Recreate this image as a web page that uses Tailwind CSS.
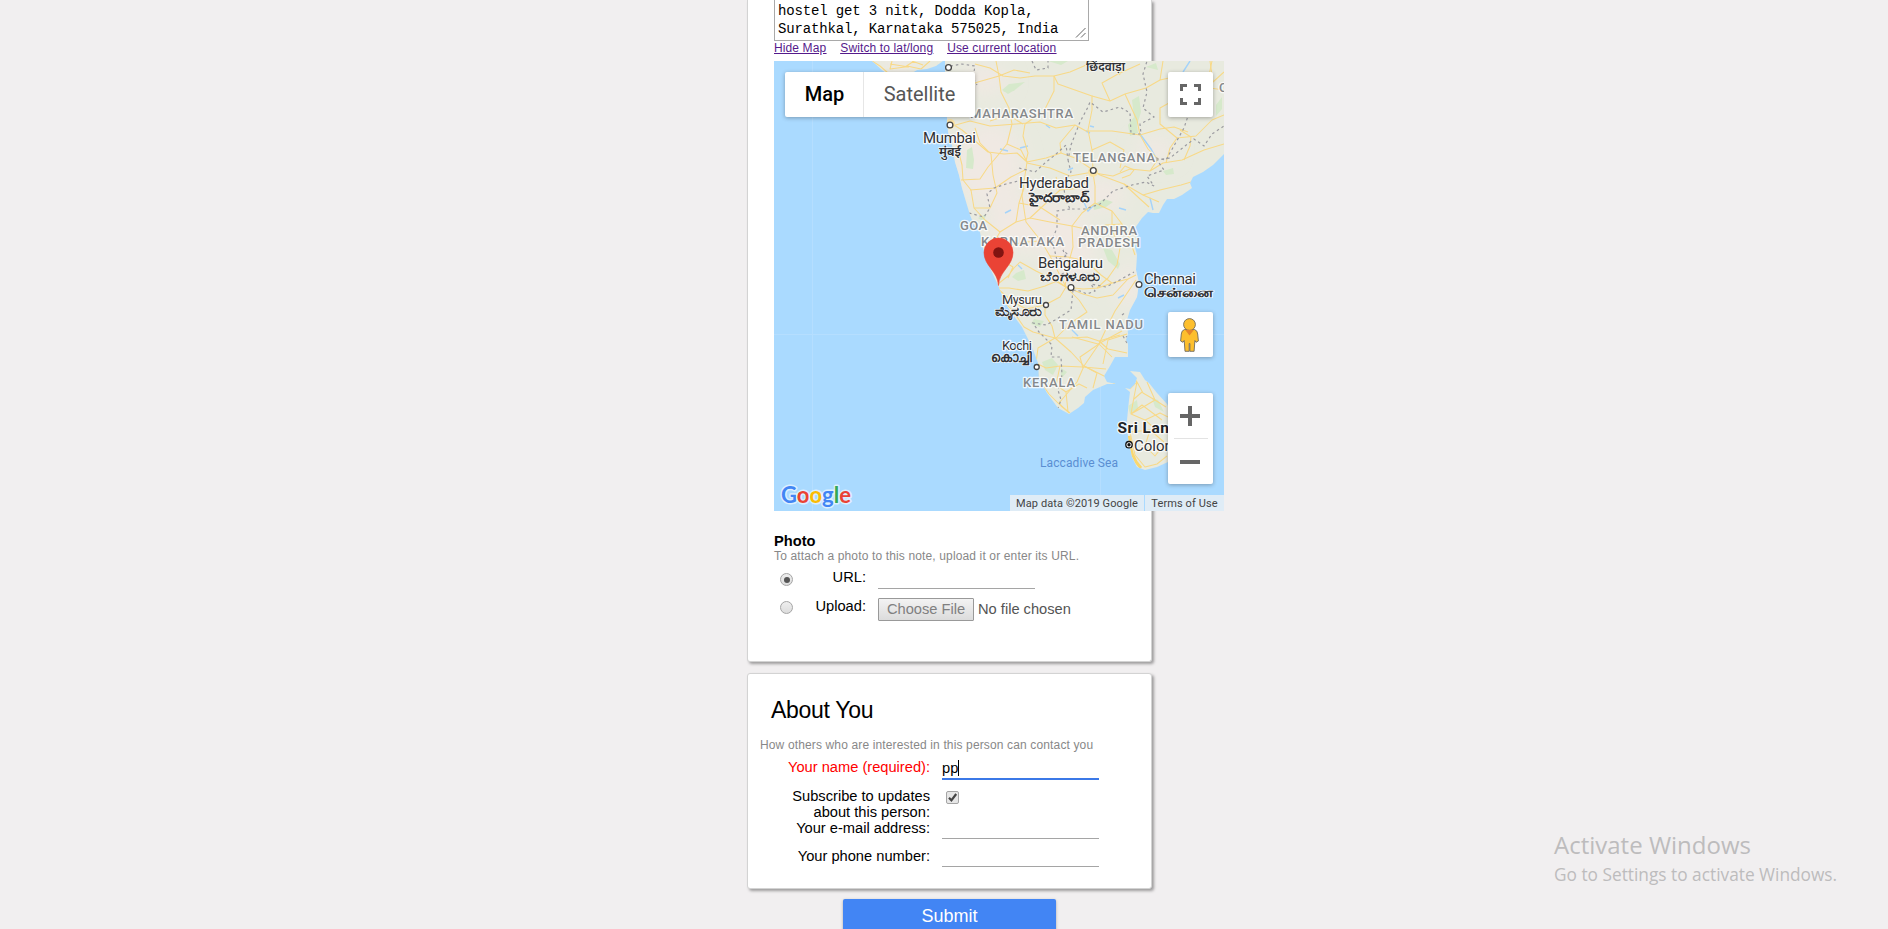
<!DOCTYPE html>
<html lang="en">
<head>
<meta charset="utf-8">
<title>Person Finder</title>
<script src="https://cdn.jsdelivr.net/npm/@tailwindcss/browser@4"></script>
</head>
<body class="relative h-[929px] overflow-hidden bg-[#f1eff0] font-['Liberation_Sans',Arial,sans-serif] text-[14.67px] text-black">
<main class="ml-[747px] flex w-[405px] flex-col">

  <section class="h-[662px] rounded-b-[3px] border border-t-0 border-[#d3d3d3] bg-white pl-[26px] shadow-[2px_2px_3px_rgba(0,0,0,0.35)]">
    <div class="relative h-[41px] w-[315px] border border-t-0 border-[#a9a9a9] pt-[2px] pl-[3px] font-['Liberation_Mono',monospace] text-[14px] leading-[18px] tracking-[-0.16px] whitespace-nowrap">
      <p>hostel get 3 nitk, Dodda Kopla,</p>
      <p>Surathkal, Karnataka 575025, India</p>
      <svg class="absolute right-[2px] bottom-[2px] size-[11px]" viewBox="0 0 11 11" stroke="#666" stroke-width="1"><path d="M1 10.500 10.500 1M6 10.500 10.500 6"/></svg>
    </div>
    <div class="flex h-5 gap-[14px] text-[12px] leading-[14px] tracking-[0.12px] whitespace-nowrap text-[#551a8b] underline">
      <a>Hide Map</a><a>Switch to lat/long</a><a>Use current location</a>
    </div>

    <div class="relative size-[450px] overflow-hidden bg-[#aadaff]">
      <svg class="block size-[450px] font-[Roboto,'Noto_Sans',sans-serif]" viewBox="774 61 450 450">
        <defs>
          <clipPath id="land">
            <path id="india" d="M945 61 945 72 945 90 947 118 948 132 952 145 955 162 959 175 962 188 967 205 970 215 974 225 980 232 983 248 990 268 998 285 1003 298 1010 311 1022 327 1032 347 1038 363 1039 378 1047 393 1058 408 1069 414 1078 408 1084 403 1085 397 1093 390 1107 384 1116 384 1107 382 1104 376 1110 366 1115 357 1128 357 1128 344 1126 340 1128 334 1127 320 1130 310 1137 297 1139 283 1136 270 1137 255 1135 247 1137 237 1135 228 1142 218 1148 212 1153 213 1159 213 1163 205 1167 199 1174 199 1182 195 1192 188 1190 183 1193 177 1203 172 1213 165 1224 154 1224 61Z"/>
            <path d="M872 61 882 70 890 76 912 73 917 70 927 69 936 66 943 61Z"/>
            <path d="M1130 371 1140 372 1145 380 1149 383 1157 393 1167 404 1180 430 1178 455 1168 462 1157 467 1145 470 1137 467 1132 457 1128 437 1127 420 1129 400 1130 392 1125 388 1130 389 1135 384 1137 378Z"/>
          </clipPath>
          <filter id="soft" x="-50%" y="-50%" width="200%" height="200%"><feGaussianBlur stdDeviation="9"/></filter>
        </defs>
        <path d="M812.500 61V511M1100.500 61V511M774 334.500H1224" stroke="#b5deff" stroke-width="1"/>
        <g clip-path="url(#land)" fill="none">
          <rect x="774" y="61" width="450" height="450" fill="#e8eadf"/>
          <g fill="#f0e9e3" filter="url(#soft)">
            <ellipse cx="990" cy="165" rx="34" ry="42"/><ellipse cx="1030" cy="225" rx="42" ry="28"/>
            <ellipse cx="1070" cy="250" rx="24" ry="38"/><ellipse cx="1100" cy="195" rx="26" ry="16"/>
            <ellipse cx="985" cy="80" rx="24" ry="14"/><ellipse cx="1128" cy="285" rx="12" ry="22"/>
            <ellipse cx="1155" cy="150" rx="20" ry="12"/><ellipse cx="900" cy="62" rx="18" ry="10"/>
          </g>
          <g fill="#d6e9cb">
            <path d="M1002 90 1009 84 1025 82 1016 89 1008 94Z"/>
            <path d="M967 150 972 147 974 160 973 169 966 168Z"/>
            <path d="M1132 100 1139 96 1141 112 1137 125 1138 133 1130 136 1128 125 1134 117Z"/>
            <path d="M1093 205 1104 199 1113 202 1106 207 1094 210Z"/>
            <path d="M1103 248 1112 250 1120 264 1118 269 1108 261Z"/>
            <path d="M1016 273 1024 270 1026 279 1018 281 1012 277Z"/>
            <path d="M1034 319 1044 321 1040 327 1031 324Z"/>
            <path d="M1042 362 1052 358 1058 365 1053 375 1045 370Z"/>
            <path d="M1163 171 1173 168 1174 174 1166 175Z"/>
            <path d="M1003 92 1020 83 1014 91ZM1004 90 1009 86 1015 86Z"/>
            <path d="M1048 61 1068 61 1061 65ZM1006 92 1012 87ZM1085 62 1094 61 1091 66Z"/>
            <path d="M1128 406 1137 400 1138 408 1130 414ZM1152 398 1158 400 1164 412 1155 407Z"/>
            <path d="M1216 105 1222 97 1222 109 1216 116ZM1146 67 1156 63 1158 70ZM1005 89 1018 83Z"/>
            <path d="M1061 368 1067 372 1061 379ZM978 218 986 214 984 222Z"/>
          </g>
          <g stroke="#a4d3fa" stroke-width="1.400">
            <path d="M1000 149 1008 151M1009 111 1012 115M1046 125 1050 128M1082 198 1088 211 1093 206M1140 134 1151 149 1156 158M1183 72 1190 61M1150 198 1153 210M1018 265 1022 269M1005 213 1011 210M1020 148 1028 146M1118 298 1124 295M1068 170 1073 168M1090 126 1094 127M1119 208 1126 210M1072 330 1078 336M1086 131 1090 133"/>
          </g>
          <g stroke="#f8d987" stroke-width="1.050" stroke-linejoin="round">
            <path d="M949 122 962 130 974 140 988 152 1004 154 1017 153 1027 162 1024 182 1022 196 1026 222 1041 241 1050 256 1066 287"/>
            <path d="M952 126 970 121 990 126 1016 124 1040 122 1056 128 1075 125 1086 131 1112 131 1140 135 1160 129 1174 127 1188 132"/>
            <path d="M961 180 980 179 988 167 999 154 1007 144 1021 150 1027 162 1046 158 1061 153 1075 158 1093 170 1100 175 1124 184 1143 195 1159 202"/>
            <path d="M957 145 962 165 963 180 971 190 974 208 985 220 1000 232 1016 222 1030 218 1050 222 1072 226 1090 230"/>
            <path d="M1093 170 1092 150 1088 130 1092 110 1092 96 1075 90 1058 84 1054 76 1035 76 1020 78 1003 76 990 68 975 64"/>
            <path d="M996 61 999 76 1001 92 1009 108 1012 124 1007 144"/>
            <path d="M945 82 962 88 978 82 999 76 1014 70 1030 73M1054 76 1070 72 1084 66 1092 61M1054 76 1054 91 1044 111 1025 124 1023 136 1028 153 1026 161"/>
            <path d="M1092 96 1110 101 1125 94 1146 88 1160 80 1178 76 1196 86 1224 90M1160 80 1163 61M1110 101 1102 83 1118 74 1140 64"/>
            <path d="M1094 173 1113 176 1130 169 1150 171 1163 163 1182 160 1204 150 1224 144M1150 171 1158 159 1148 149 1140 135 1137 120 1125 94"/>
            <path d="M1093 173 1095 186 1095 203 1112 211 1122 224 1130 240 1135 255M1095 203 1082 213 1072 226 1073 247 1068 265 1065 287"/>
            <path d="M1093 172 1070 176 1050 168 1027 163M1087 175 1082 188 1060 190 1044 205 1030 218M1060 190 1056 177"/>
            <path d="M1124 184 1139 198 1149 207M1143 195 1160 190 1181 185 1191 182M1120 172 1125 166 1134 170 1130 175 1122 178"/>
            <path d="M998 288 1009 288 1028 291 1045 286 1057 281 1066 287 1083 289 1098 288 1112 283 1128 279 1136 275"/>
            <path d="M998 284 1008 276 1014 268 1020 262 1036 271 1050 278 1066 287M984 247 998 246 1010 245 1026 242 1040 241M1000 232 993 244 1001 260 1013 267 1008 278"/>
            <path d="M1045 305 1045 315 1052 326 1055 338 1071 338 1087 337 1099 341 1120 335M1045 305 1060 297 1066 287 1083 294 1097 298 1113 295 1128 279"/>
            <path d="M998 289 1012 301 1026 309 1045 305M1002 300 1013 311 1024 327 1033 332 1055 338 1038 348 1036 363 1046 368 1060 366 1083 367 1106 369"/>
            <path d="M1084 366 1099 344 1107 327 1115 311 1136 280M1084 366 1071 352 1055 338M1084 366 1077 382 1059 403 1069 413M1084 366 1097 373 1093 388M1056 338 1071 323 1087 312 1079 300 1066 287"/>
            <path d="M1099 344 1112 357M1099 341 1108 349 1127 353M1127 334 1108 340 1103 364M1072 337 1098 344 1122 331M1083 368 1080 357 1099 344M1084 366 1106 377 1115 384"/>
            <path d="M1036 363 1039 380 1049 394 1061 406 1070 413M1060 366 1056 385 1066 392 1079 384 1087 388M1066 392 1068 412"/>
            <path d="M1112 211 1112 230 1120 248 1117 265 1108 278 1097 288M1050 256 1068 257 1086 261 1101 275 1112 283M1090 230 1106 225 1122 224"/>
            <path d="M970 190 995 188 1011 177 1025 170M974 208 990 208 997 193 993 175 991 154 980 143 975 128M1016 222 1019 203 1024 188M1019 203 1040 207 1060 220"/>
            <path d="M1092 150 1110 142 1124 150 1120 168M1166 163 1170 148 1177 138 1196 136 1212 120 1224 115M1177 138 1160 124 1160 108 1178 98 1196 100 1206 90 1212 61"/>
            <path d="M1180 130 1191 137 1190 146 1184 160M1075 125 1060 143 1061 153M1023 124 1008 115 990 121M1210 61 1213 82 1224 72M1112 61 1120 75M1178 98 1186 82"/>
            <path d="M872 61 880 66 888 73M892 61 890 69 905 67 914 61M907 66 921 69 930 61M890 64 909 67M912 61 923 65"/>
            <path d="M1130 372 1137 382 1143 393 1155 400 1166 407M1137 382 1134 397 1131 414 1145 406 1155 400 1147 382M1131 414 1145 420 1160 413 1168 417M1131 414 1142 405 1162 420M1130 432 1150 430 1164 442M1130 432 1135 455 1145 467 1157 464 1167 456M1145 420 1160 433 1166 426M1150 430 1145 446 1155 456 1166 442M1137 382 1130 389M1142 392 1134 399"/>
          </g>
          <path d="M1129 436Q1130 457 1141 468" stroke="#f9d76f" stroke-width="3"/>
          <circle cx="1093" cy="172" r="5" fill="#fbe3a2"/>
          <circle cx="950" cy="124" r="5" fill="#fbe3a2"/>
          <g stroke="#9b9ba0" stroke-width="1.200" stroke-dasharray="2.500 3">
            <path d="M969 213 984 217 990 208 987 194 994 188 1006 184 1018 181M1019 168 1035 172 1045 163 1055 155 1066 145 1068 160 1071 145 1080 122 1088 107 1090 102 1103 112 1120 107 1130 113 1131 134 1141 134 1140 124 1154 117 1143 108 1147 92 1143 74 1147 61"/>
            <path d="M1068 160 1071 172 1063 184 1066 200 1070 209 1085 209 1100 204 1113 191 1132 185 1146 182 1154 186 1147 176 1164 170 1157 160 1170 158 1185 146 1194 139 1204 146 1212 134 1224 126"/>
            <path d="M1070 209 1057 211 1057 228 1052 240 1057 260 1068 255 1063 250 1070 267 1058 278M1073 290 1080 291 1087 294 1095 291 1091 284 1106 287 1118 281 1134 272M1073 290 1071 310 1055 320 1046 325 1033 323 1039 332 1052 345 1051 357 1061 357 1062 375 1058 390 1061 400 1058 408"/>
            <path d="M945 67 962 64 975 66 973 78 977 85M1032 61 1036 70 1048 68 1048 61M1156 158 1166 160 1184 128 1188 116 1204 112M1127 343 1123 336 1128 337M1122 315 1126 312"/>
          </g>
        </g>
        <g stroke="#fff" stroke-width="2.500" stroke-opacity=".8" stroke-linejoin="round" paint-order="stroke">
          <g fill="#85888b" font-size="13" font-weight="500" lengthAdjust="spacing">
            <text x="970" y="117.500" textLength="103">MAHARASHTRA</text>
            <text x="1073" y="162" textLength="82">TELANGANA</text>
            <text x="1081" y="234.500" textLength="56">ANDHRA</text>
            <text x="1078" y="247" textLength="62">PRADESH</text>
            <text x="981" y="246" textLength="83">KARNATAKA</text>
            <text x="960" y="230" textLength="27">GOA</text>
            <text x="1059" y="329" textLength="84">TAMIL NADU</text>
            <text x="1023" y="386.500" textLength="52">KERALA</text>
            <text x="1219" y="92">C</text>
          </g>
          <g fill="#303134" font-size="15">
            <text x="923" y="142.500" textLength="53">Mumbai</text>
            <text x="1019" y="188" textLength="70">Hyderabad</text>
            <text x="1038" y="267.500" textLength="65">Bengaluru</text>
            <text x="1144" y="283.500" textLength="52">Chennai</text>
            <text x="1134" y="450.500">Colombo</text>
          </g>
          <g fill="#303134" font-size="13">
            <text x="1002" y="303.500" textLength="40">Mysuru</text>
            <text x="1002" y="349.500" textLength="30">Kochi</text>
          </g>
          <g fill="#303134" font-size="13" font-weight="600" stroke-width="1.600">
            <text x="939" y="155.500" textLength="22" lengthAdjust="spacingAndGlyphs">मुंबई</text>
            <text x="1086" y="70.500" textLength="39" lengthAdjust="spacingAndGlyphs">छिंदवाड़ा</text>
            <text x="1029" y="201.500" textLength="60" lengthAdjust="spacingAndGlyphs">హైదరాబాద్</text>
            <text x="1040" y="281" textLength="60" lengthAdjust="spacingAndGlyphs">ಬೆಂಗಳೂರು</text>
            <text x="1144" y="296.500" textLength="70" lengthAdjust="spacingAndGlyphs">சென்னை</text>
            <text x="995" y="316" textLength="47" lengthAdjust="spacingAndGlyphs">ಮೈಸೂರು</text>
            <text x="991" y="362" textLength="41" lengthAdjust="spacingAndGlyphs">കൊച്ചി</text>
          </g>
          <text x="1117.500" y="433" fill="#202124" font-size="15.500" font-weight="700" textLength="69">Sri Lanka</text>
        </g>
        <text x="1040" y="466.500" textLength="78" fill="#5a8ed2" font-size="12">Laccadive Sea</text>
        <g fill="#fff" stroke="#444" stroke-width="1.300">
          <circle cx="948.500" cy="67.500" r="2.900"/><circle cx="950" cy="125" r="2.900"/><circle cx="1093.300" cy="170.500" r="2.900"/>
          <circle cx="1071" cy="287.500" r="2.900"/><circle cx="1139" cy="284.500" r="2.900"/><circle cx="1046" cy="305" r="2.500"/><circle cx="1036.700" cy="367" r="2.500"/>
        </g>
        <circle cx="1129" cy="444.700" r="3.200" fill="#fff" stroke="#111" stroke-width="1.300"/><circle cx="1129" cy="444.700" r="1.700" fill="#111"/>
        <path d="M998.500 285.500C997.800 271 984 266 984 252.500a14.500 14.500 0 0 1 29 0C1013 266 999.200 271 998.500 285.500Z" fill="#ea4335" stroke="#ea4335" stroke-width=".6"/>
        <circle cx="998.500" cy="252.500" r="5.300" fill="#811411"/>
        <g font-family="Lato" font-size="22.500" stroke="#fff" stroke-opacity=".6" stroke-width="3" paint-order="stroke" stroke-linejoin="round">
          <text x="781" y="502.500" font-weight="700" textLength="70" lengthAdjust="spacingAndGlyphs"><tspan fill="#4285f4">G</tspan><tspan fill="#ea4335">o</tspan><tspan fill="#fbbc05">o</tspan><tspan fill="#4285f4">g</tspan><tspan fill="#34a853">l</tspan><tspan fill="#ea4335">e</tspan></text>
        </g>
      </svg>

      <div class="absolute top-[11px] left-[11px] flex h-[45px] w-[190px] rounded-[2px] bg-white font-[Roboto,sans-serif] text-[20px] leading-[45px] shadow-[0_1px_4px_rgba(0,0,0,0.3)]">
        <span class="w-[79px] border-r border-[#e6e6e6] pl-px text-center font-medium">Map</span>
        <span class="flex-1 text-center text-[#565656]">Satellite</span>
      </div>
      <div class="absolute top-[11px] right-[11px] flex size-[45px] items-center justify-center rounded-[2px] bg-white shadow-[0_1px_4px_rgba(0,0,0,0.3)]">
        <svg class="size-[21px]" viewBox="0 0 21 21" fill="none" stroke="#666" stroke-width="3"><path d="M1.500 7V1.500H7M14 1.500H19.500V7M19.500 14V19.500H14M7 19.500H1.500V14"/></svg>
      </div>
      <div class="absolute top-[251px] right-[11px] flex size-[45px] items-center justify-center rounded-[2px] bg-white pr-[2px] shadow-[0_1px_4px_rgba(0,0,0,0.3)]">
        <svg class="h-[34px] w-[19px]" viewBox="0 0 19 34" stroke="#6f6b60" stroke-width=".9" stroke-linejoin="round"><path d="M4.500 11.500 Q1.500 12.500 1.300 16L.6 23 3 24.300 4.200 22.500 5 33.300H9.200V25.500H9.900V33.300H14.100L14.900 22.500 16 24.300 18.400 23 17.700 16Q17.500 12.500 14.500 11.500Z" fill="#fdbf2d"/><circle cx="9.500" cy="6.500" r="5.900" fill="#fdbf2d"/><path d="M5 11.800 9.500 17.500 14 11.800Z" fill="#e5852b" stroke="none"/></svg>
      </div>
      <div class="absolute top-[332px] right-[11px] flex h-[91px] w-[45px] flex-col items-center rounded-[2px] bg-white shadow-[0_1px_4px_rgba(0,0,0,0.3)]">
        <div class="flex h-[45px] w-full items-center justify-center pr-px"><svg class="size-5" viewBox="0 0 20 20" fill="#666"><path d="M8 0h4v8h8v4h-8v8H8v-8H0V8h8z"/></svg></div>
        <div class="h-px w-[34px] bg-[#e3e3e3]"></div>
        <div class="flex h-[45px] w-full items-center justify-center pr-px"><div class="h-1 w-5 bg-[#666]"></div></div>
      </div>
      <div class="absolute right-0 bottom-0 flex h-4 gap-px font-[Roboto,sans-serif] text-[11px] leading-[17px] tracking-[0.1px] whitespace-nowrap text-[#444]">
        <span class="w-[134px] bg-[#dfecf6] text-center">Map data ©2019 Google</span><span class="w-[79px] bg-[#dfecf6] text-center">Terms of Use</span>
      </div>
    </div>

    <h3 class="mt-[21px] h-[17px] leading-[18px] font-bold">Photo</h3>
    <p class="h-[18px] text-[12px] leading-[15px] tracking-[0.14px] whitespace-nowrap text-[#888]">To attach a photo to this note, upload it or enter its URL.</p>
    <div class="flex h-[28px]">
      <span class="mt-[6px] ml-[6px] flex size-[13px] items-center justify-center rounded-full border border-[#a5a5a5] bg-linear-to-b from-[#eee] to-[#ddd]"><span class="size-[6px] rounded-full bg-[#555]"></span></span>
      <span class="w-[73px] pt-[2px] text-right leading-[17px]">URL:</span>
      <span class="ml-3 h-[22px] w-[157px] border-b border-[#a5a5a5]"></span>
    </div>
    <div class="flex h-[28px]">
      <span class="mt-[6px] ml-[6px] size-[13px] rounded-full border border-[#a5a5a5] bg-linear-to-b from-[#eee] to-[#ddd]"></span>
      <span class="w-[73px] pt-[3px] text-right leading-[17px]">Upload:</span>
      <span class="mt-[3px] ml-3 h-[23px] w-[96px] rounded-[1px] border border-[#999] bg-linear-to-b from-[#f3f3f3] to-[#dcdcdc] text-center leading-[21px] text-[#808080]">Choose File</span>
      <span class="mt-[3px] ml-[4px] leading-[23px] text-[#545454]">No file chosen</span>
    </div>
  </section>

  <section class="mt-[11px] h-[216px] rounded-[3px] border border-[#d3d3d3] bg-white shadow-[2px_2px_3px_rgba(0,0,0,0.35)]">
    <h2 class="mt-[22px] ml-[23px] h-[42px] text-[23px] leading-[28px] tracking-[-0.3px]">About You</h2>
    <p class="ml-[12px] h-[20px] text-[12px] leading-[15px] tracking-[0.14px] whitespace-nowrap text-[#888]">How others who are interested in this person can contact you</p>
    <div class="grid grid-cols-[182px_157px] grid-rows-[29px_32px_28px_28px] gap-x-3 text-right leading-4">
      <label class="pt-px text-[#f00]">Your name (required):</label>
      <div class="h-[22px] border-b-2 border-[#3b78e7] pt-[2px] text-left leading-4 text-black"><span class="inline-block h-4 border-r border-black">pp</span></div>
      <label class="pt-px">Subscribe to updates<br>about this person:</label>
      <div class="pt-[4px] pl-1"><svg class="size-[13px]" viewBox="0 0 13 13"><rect x=".5" y=".5" width="12" height="12" rx="1.500" fill="#e6e6e6" stroke="#a5a5a5"/><path d="M3 6.800 5.400 9.300 10.200 3" fill="none" stroke="#444" stroke-width="2.200"/></svg></div>
      <label class="pt-px">Your e-mail address:</label><div class="h-[20px] border-b border-[#a5a5a5]"></div>
      <label class="pt-px">Your phone number:</label><div class="h-[20px] border-b border-[#a5a5a5]"></div>
    </div>
  </section>

  <button class="mt-[10px] ml-[96px] h-[36px] w-[213px] rounded-[2px] bg-[#4285f4] pb-[3px] text-[18px] leading-[30px] text-white shadow-[0_1px_3px_rgba(0,0,0,0.3)]">Submit</button>
</main>

<aside class="absolute top-[828px] left-[1554px] font-['Open_Sans',sans-serif] whitespace-nowrap text-[#bdbcbd]">
  <p class="text-[24px] leading-[33px]">Activate Windows</p>
  <p class="text-[17.3px] leading-[27px]">Go to Settings to activate Windows.</p>
</aside>
</body>
</html>
